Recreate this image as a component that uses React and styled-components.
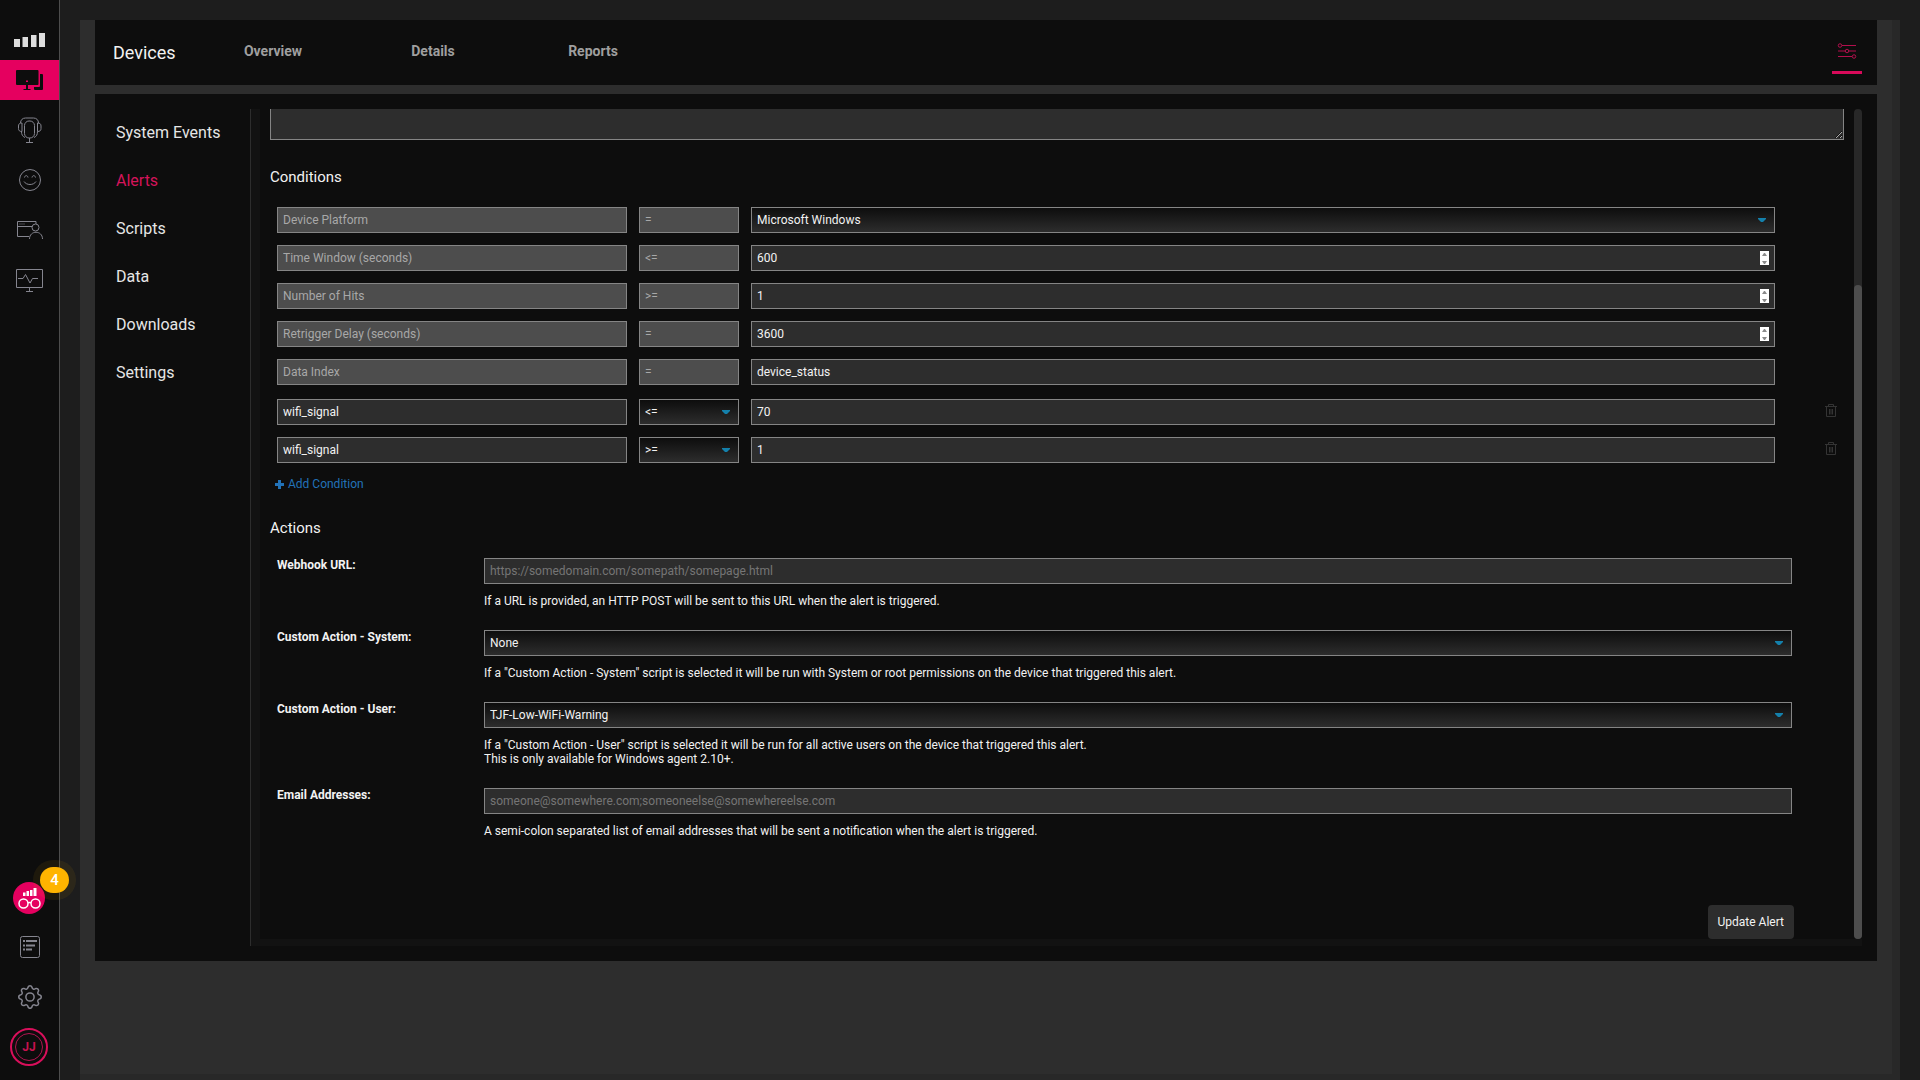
import styled, { createGlobalStyle } from "styled-components";
import { BsGear } from "react-icons/bs";

const fixedConditions = [
  { name: "Device Platform", operator: "=", value: "Microsoft Windows", type: "select" },
  { name: "Time Window (seconds)", operator: "<=", value: "600", type: "number" },
  { name: "Number of Hits", operator: ">=", value: "1", type: "number" },
  { name: "Retrigger Delay (seconds)", operator: "=", value: "3600", type: "number" },
  { name: "Data Index", operator: "=", value: "device_status", type: "text" },
];

const customConditions = [
  { id: 1, name: "wifi_signal", operator: "<=", value: "70" },
  { id: 2, name: "wifi_signal", operator: ">=", value: "1" },
];

const menu = ["System Events", "Alerts", "Scripts", "Data", "Downloads", "Settings"];

function SelectField({ options, ...props }) {
  return (
    <FieldWrap>
      <Select {...props}>
        {options.map((option) => (
          <option key={option}>{option}</option>
        ))}
      </Select>
      <Caret viewBox="0 0 8 4">
        <path d="M0 0h8v1L5 4H3L0 1z" />
      </Caret>
    </FieldWrap>
  );
}

function NumberField(props) {
  return (
    <FieldWrap>
      <Input type="number" {...props} />
      <Spinner viewBox="0 0 9 14">
        <rect width="9" height="14" fill="#fff" />
        <path d="M2 5l2-3h1l2 3zM2 10h5l-2 3H4z" fill="#8b8b8b" />
      </Spinner>
    </FieldWrap>
  );
}

function ConditionValue({ condition }) {
  const label = `${condition.name} value`;
  if (condition.type === "select") {
    return <SelectField aria-label={label} options={[condition.value]} />;
  }
  if (condition.type === "number") {
    return <NumberField aria-label={label} defaultValue={condition.value} />;
  }
  return <Input aria-label={label} defaultValue={condition.value} />;
}

function Rail() {
  return (
    <RailContainer>
      <RailGroup>
        <RailLogo viewBox="0 0 60 60">
          <path d="M14 39h6v8h-6zM22.500 37h5.500v10h-5.500zM31 35h5.500v12H31zM39 33h6v14h-6z" />
        </RailLogo>
        <RailLink href="#devices" aria-label="Devices" $active>
          <svg viewBox="0 0 60 40">
            <path
              d="M17 10h20.500q1 0 1 1v13q0 1-1 1H28v4h2.500v1h-7v-1H26v-4h-9q-1 0-1-1V11q0-1 1-1z"
              fill="#0d0d0d"
            />
            <path d="M40 14h2q1 0 1 1v14q0 1-1 1h-7q-1 0-1-1v-2h5q1 0 1-1z" fill="#0d0d0d" />
            <path d="M26 20.500h2v1.500h-2z" fill="#e5005f" />
          </svg>
        </RailLink>
        <RailLink href="#support" aria-label="Support">
          <svg viewBox="0 0 60 40">
            <rect x="24.500" y="11" width="10" height="17" rx="4.500" />
            <path d="M20.500 13c0-3 2-5 5-5h8c3 0 5 2 5 5M22 13c-2.500 0-3.500 1-3.500 3v2.500c0 2 1 3 3.500 3V13M37.500 13c2.500 0 3.500 1 3.500 3v2.500c0 2-1 3-3.500 3V13M21.500 21.500c0 3 1 5 3.500 6M37.500 21.500c0 3-1 5-3.500 6M29.500 28v4.500M26 32.500h7" />
          </svg>
        </RailLink>
        <RailLink href="#experience" aria-label="Experience">
          <svg viewBox="0 0 60 40">
            <circle cx="30" cy="20" r="10.500" />
            <path d="M24.500 17.500c.500-2.500 3-2.500 3.500 0M32 17.500c.500-2.500 3-2.500 3.500 0M24 21.500c2.500 4 9.500 4 12 0" />
          </svg>
        </RailLink>
        <RailLink href="#users" aria-label="Users">
          <svg viewBox="0 0 60 40">
            <path d="M36 14v-2.500H17.500v15H29M17.500 16.500H32M19.500 14h1M21.500 14h1M23.500 14h1" />
            <circle cx="35.500" cy="17.500" r="3.500" />
            <path d="M29.500 29c0-9 13-9 13 0" />
          </svg>
        </RailLink>
        <RailLink href="#monitoring" aria-label="Monitoring">
          <svg viewBox="0 0 60 40">
            <path d="M16.500 9.500h26v18h-26zM29.500 27.500v4M26 31.500h7M18 18.500h5l2.500-4 4.500 8.500 2.500-4.500H38" />
          </svg>
        </RailLink>
      </RailGroup>
      <RailGroup $bottom>
        <RailLink href="#insights" aria-label="Insights">
          <svg viewBox="0 0 60 40">
            <circle cx="29" cy="21" r="16" fill="#e5005f" stroke="none" />
            <path d="M23 15.500h2.500V19H23zM26.500 14H29v5h-2.500zM30 13h2.500v6H30zM33.500 11h3v8h-3z" fill="#fff" stroke="none" />
            <g stroke="#fff" strokeWidth="1.500">
              <circle cx="23.500" cy="26.500" r="4.500" />
              <circle cx="35.500" cy="26.500" r="4.500" />
              <path d="M28 26q1.500-1 3 0" />
            </g>
          </svg>
          <Badge>4</Badge>
        </RailLink>
        <RailLink href="#reports" aria-label="Lists">
          <svg viewBox="0 0 60 40">
            <rect x="20.500" y="9.500" width="19" height="21" rx="2" />
            <path d="M23 14h2M26 14h11M23 18.500h2M26 18.500h9M23 22.500h2M26 22.500h6" strokeWidth="2" />
          </svg>
        </RailLink>
        <RailLink href="#settings" aria-label="Settings">
          <BsGear size={24} />
        </RailLink>
        <RailLink href="#profile" aria-label="Profile">
          <Avatar>
            <span>JJ</span>
          </Avatar>
        </RailLink>
      </RailGroup>
    </RailContainer>
  );
}

export default function App() {
  return (
    <Page>
      <GlobalStyle />
      <Rail />
      <Main>
        <Header>
          <Title>Devices</Title>
          <Tabs>
            <a href="#overview">Overview</a>
            <a href="#details">Details</a>
            <a href="#reports">Reports</a>
          </Tabs>
          <FilterButton type="button" aria-label="Filters">
            <svg width="20" height="16" viewBox="0 0 20 16">
              <path d="M5 2.500h14M1 8h7M12 8h7M1 13.500h14" />
              <circle cx="3" cy="2.500" r="1.750" />
              <circle cx="10" cy="8" r="1.750" />
              <circle cx="17" cy="13.500" r="1.750" />
            </svg>
          </FilterButton>
        </Header>

        <Panel>
          <Menu>
            {menu.map((item) => (
              <MenuLink key={item} href="#menu" $active={item === "Alerts"}>
                {item}
              </MenuLink>
            ))}
          </Menu>
          <Frame>
            <Form>
              <Description aria-label="Description" />

              <Heading>Conditions</Heading>
              <Rows>
                {fixedConditions.map((condition) => (
                  <ConditionRow key={condition.name}>
                    <Input disabled aria-label="Condition" value={condition.name} />
                    <Input disabled aria-label="Operator" value={condition.operator} />
                    <ConditionValue condition={condition} />
                  </ConditionRow>
                ))}
              </Rows>
              <Rows $custom>
                {customConditions.map((condition) => (
                  <ConditionRow key={condition.id}>
                    <Input aria-label="Condition" defaultValue={condition.name} />
                    <SelectField
                      aria-label="Operator"
                      defaultValue={condition.operator}
                      options={["<=", ">=", "="]}
                    />
                    <ConditionValue condition={condition} />
                    <TrashButton type="button" aria-label="Delete condition">
                      <svg width="12" height="14" viewBox="0 0 12 14">
                        <path d="M0 2.500h12M3.500 2.500v-2h5v2M1.500 3v9.500h9V3M4.500 5v5.500M6 5v5.500M7.500 5v5.500" />
                      </svg>
                    </TrashButton>
                  </ConditionRow>
                ))}
              </Rows>
              <AddButton type="button">
                <svg width="9" height="9" viewBox="0 0 9 9">
                  <path d="M3 0h3v3h3v3H6v3H3V6H0V3h3z" />
                </svg>
                Add Condition
              </AddButton>

              <Heading>Actions</Heading>
              <Actions>
                <ActionRow>
                  <label htmlFor="webhook">Webhook URL:</label>
                  <div>
                    <Input id="webhook" placeholder="https://somedomain.com/somepath/somepage.html" />
                    <Help>If a URL is provided, an HTTP POST will be sent to this URL when the alert is triggered.</Help>
                  </div>
                </ActionRow>
                <ActionRow>
                  <label htmlFor="system">Custom Action - System:</label>
                  <div>
                    <SelectField id="system" options={["None"]} />
                    <Help>
                      If a "Custom Action - System" script is selected it will be run with System or root permissions on
                      the device that triggered this alert.
                    </Help>
                  </div>
                </ActionRow>
                <ActionRow>
                  <label htmlFor="user">Custom Action - User:</label>
                  <div>
                    <SelectField id="user" options={["TJF-Low-WiFi-Warning"]} />
                    <Help>
                      If a "Custom Action - User" script is selected it will be run for all active users on the device
                      that triggered this alert.
                      <br />
                      This is only available for Windows agent 2.10+.
                    </Help>
                  </div>
                </ActionRow>
                <ActionRow>
                  <label htmlFor="emails">Email Addresses:</label>
                  <div>
                    <Input id="emails" placeholder="someone@somewhere.com;someoneelse@somewhereelse.com" />
                    <Help>
                      A semi-colon separated list of email addresses that will be sent a notification when the alert is
                      triggered.
                    </Help>
                  </div>
                </ActionRow>
              </Actions>
              <SubmitButton type="submit">Update Alert</SubmitButton>
            </Form>
            <ScrollTrack>
              <ScrollThumb />
            </ScrollTrack>
          </Frame>
        </Panel>
      </Main>
    </Page>
  );
}

const GlobalStyle = createGlobalStyle`
  * {
    box-sizing: border-box;
  }
  body {
    margin: 0;
    background-color: #1d1d1d;
    color: #f2f2f2;
    font-family: Roboto, sans-serif;
    font-size: 12px;
    line-height: 14px;
  }
  a {
    text-decoration: none;
  }
  button, input, select, textarea {
    font: inherit;
    color: inherit;
  }
  button {
    border: none;
    background: none;
    padding: 0;
    cursor: pointer;
  }
`;

const Page = styled.div`
  display: flex;
  min-height: 100vh;
`;

const RailContainer = styled.nav`
  display: flex;
  flex-direction: column;
  justify-content: space-between;
  flex: none;
  width: 60px;
  background-color: #0d0d0d;
  border-right: 1px solid #4d4d4d;
`;
const RailGroup = styled.div`
  display: flex;
  flex-direction: column;
  gap: 10px;
  padding-bottom: ${(props) => (props.$bottom ? "13px" : "0")};
`;
const RailLogo = styled.svg`
  width: 60px;
  height: 60px;
  margin-bottom: -10px;
  fill: #ddd;
`;
const RailLink = styled.a`
  position: relative;
  display: flex;
  align-items: center;
  height: 40px;
  padding-left: 18px;
  color: #85858f;
  background-color: ${(props) => (props.$active ? "#e5005f" : "transparent")};

  > svg[viewBox="0 0 60 40"] {
    flex: none;
    width: 60px;
    height: 40px;
    margin-left: -18px;
    fill: none;
    stroke: ${(props) => (props.$active ? "none" : "currentColor")};
  }
`;
const Badge = styled.span`
  position: absolute;
  left: 40px;
  top: -10px;
  width: 29px;
  height: 26px;
  border-radius: 13px;
  background-color: #ffb400;
  box-shadow: 0 0 0 7px rgba(255, 180, 0, 0.07);
  color: #fff;
  font-size: 15px;
  font-weight: 500;
  line-height: 26px;
  text-align: center;
`;
const Avatar = styled.span`
  display: flex;
  margin-left: -8px;
  padding: 3px;
  border: 2px solid #d90f5b;
  border-radius: 50%;

  span {
    width: 28px;
    height: 28px;
    border: 1px solid #b01550;
    border-radius: 50%;
    color: #c8124f;
    font-size: 12px;
    font-weight: 700;
    line-height: 26px;
    text-align: center;
  }
`;

const Main = styled.main`
  flex: 1;
  min-width: 0;
  margin: 20px 20px 0;
  padding: 0 15px 6px;
  background-color: #2d2d2d;
  border-right: 8px solid #282828;
  border-bottom: 6px solid #282828;
`;
const Header = styled.header`
  display: flex;
  align-items: center;
  height: 65px;
  padding: 0 15px 0 18px;
  background-color: #0d0d0d;
`;
const Title = styled.h1`
  width: 80px;
  margin: 0;
  font-size: 18px;
  font-weight: 400;
  line-height: 24px;
`;
const Tabs = styled.nav`
  display: flex;
  flex: 1;
  padding-bottom: 4px;

  a {
    width: 160px;
    color: #9f9f9f;
    font-size: 14px;
    font-weight: 700;
    line-height: 20px;
    text-align: center;
  }
`;
const FilterButton = styled.button`
  display: flex;
  justify-content: center;
  align-self: flex-end;
  width: 30px;
  height: 31px;
  margin-bottom: 11px;
  border-bottom: 3px solid #d80a5a;

  svg {
    fill: none;
    stroke: #b30f4d;
  }
`;

const Panel = styled.section`
  display: flex;
  margin-top: 9px;
  padding: 15px;
  background-color: #0d0d0d;
`;
const Menu = styled.nav`
  display: flex;
  flex-direction: column;
  width: 140px;
  padding-left: 6px;
`;
const MenuLink = styled.a`
  color: ${(props) => (props.$active ? "#d4145a" : "#e6e6e6")};
  font-size: 16px;
  line-height: 48px;
`;
const Frame = styled.div`
  display: flex;
  flex: 1;
  min-width: 0;
  border-left: 1px solid #2d2d2d;
  box-shadow: inset 9px -7px 0 #121212;
  padding: 0 0 7px 9px;
`;
const Form = styled.form`
  display: flex;
  flex-direction: column;
  flex: 1;
  min-width: 0;
  padding: 0 10px;
`;
const Description = styled.textarea`
  height: 31px;
  border: 1px solid #858585;
  border-top: none;
  background-color: #2d2d2d;
`;
const Heading = styled.h2`
  margin: 27px 0 20px;
  font-size: 15px;
  font-weight: 400;
  line-height: 20px;
`;

const Rows = styled.div`
  display: flex;
  flex-direction: column;
  gap: 12px;
  margin-top: ${(props) => (props.$custom ? "14px" : "0")};
  padding-left: 7px;
`;
const ConditionRow = styled.div`
  display: grid;
  grid-template-columns: 350px 100px minmax(0, 1fr) 57px;
  gap: 12px;
`;
const FieldWrap = styled.div`
  position: relative;
`;
const Input = styled.input`
  display: block;
  width: 100%;
  height: 26px;
  padding: 0 5px;
  border: 1px solid #858585;
  border-radius: 0;
  background-color: #2d2d2d;
  appearance: textfield;

  &:disabled {
    background-color: #4d4d4d;
    color: #a8a8a8;
  }
  &::placeholder {
    color: #757575;
  }
  &::-webkit-inner-spin-button {
    appearance: none;
  }
`;
const Select = styled.select`
  display: block;
  width: 100%;
  height: 26px;
  padding: 0 5px;
  border: 1px solid #858585;
  border-radius: 0;
  background: linear-gradient(#0d0d0d, #2d2d2d);
  appearance: none;
`;
const Caret = styled.svg`
  position: absolute;
  right: 9px;
  top: 11px;
  width: 8px;
  height: 4px;
  fill: #1480ab;
  pointer-events: none;
`;
const Spinner = styled.svg`
  position: absolute;
  right: 6px;
  top: 6px;
  width: 9px;
  height: 14px;
  pointer-events: none;
`;
const TrashButton = styled.button`
  display: flex;
  align-self: start;
  justify-self: end;
  margin: 5px 7px 0 0;

  svg {
    fill: none;
    stroke: #343434;
  }
`;
const AddButton = styled.button`
  display: flex;
  align-items: center;
  align-self: flex-start;
  gap: 4px;
  margin: 14px 0 0 5px;
  color: #2272b8;

  svg {
    fill: currentColor;
  }
`;

const Actions = styled.div`
  display: flex;
  flex-direction: column;
  gap: 22px;
  padding: 0 52px 0 7px;
`;
const ActionRow = styled.div`
  display: grid;
  grid-template-columns: 207px minmax(0, 1fr);

  label {
    font-weight: 700;
  }
`;
const Help = styled.p`
  margin: 10px 0 0;
`;
const SubmitButton = styled.button`
  align-self: flex-end;
  height: 34px;
  margin: 67px 50px 0 0;
  padding: 0 10px;
  border-radius: 4px;
  background-color: #2d2d2d;
`;
const ScrollTrack = styled.div`
  display: flex;
  align-items: flex-end;
  width: 8px;
  border-radius: 4px;
  background-color: #282828;
`;
const ScrollThumb = styled.div`
  width: 8px;
  height: calc(100% - 176px);
  border-radius: 4px;
  background-color: #4d4d4d;
`;
